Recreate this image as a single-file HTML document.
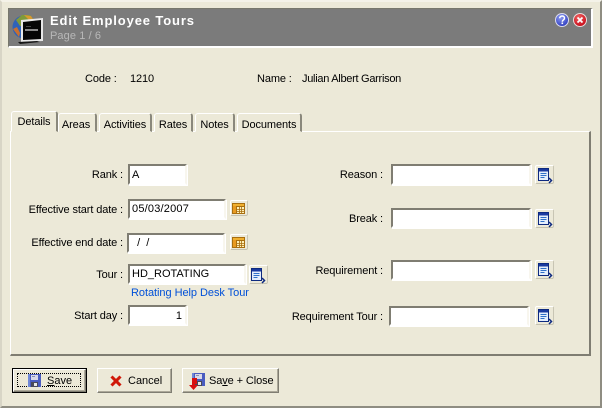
<!DOCTYPE html>
<html><head><meta charset="utf-8"><style>
html,body{margin:0;padding:0}
body{width:602px;height:408px;overflow:hidden;background:#ece9d8;position:relative;font:11px "Liberation Sans",sans-serif;color:#000}
div{position:absolute;box-sizing:border-box}
.t{white-space:nowrap;line-height:14px;height:14px}
.l{letter-spacing:-.12px}
.r{text-align:right}
.i{background:#fff;border:2px solid;border-color:#7f7d72 #f8f6ee #fff #7f7d72;box-shadow:1px 1px 0 #fff;font-size:11px;line-height:17px;padding-left:2px;white-space:nowrap}
.tab{height:19px;border:1px solid;border-color:#fff #8a887c #ece9d8 #fff;border-right-width:2px;border-radius:3px 3px 0 0;text-align:center;line-height:20px;padding-top:1px;background:#ece9d8;white-space:nowrap;letter-spacing:-.1px}
.b{border:1px solid;border-color:#fff #c8c5b4 #c4c1b0 #fff;border-radius:2px;background:#ece9d8}
.b svg,.btn svg{position:absolute}
.btn{height:25px;border:1px solid;border-color:#fff #7f7d72 #7f7d72 #fff;box-shadow:inset -1px -1px 0 #aca899;background:#ece9d8;font-size:11px;line-height:25px;white-space:nowrap}
u{text-decoration:underline}
</style></head><body>
<div style="left:0;top:0;width:602px;height:408px;border:2px solid;border-color:#f4f2e8 #8f8d82 #8f8d82 #d8d5c6"></div>
<div style="left:8px;top:8px;width:585px;height:40px;background:#7b7b7b;border:1px solid;border-color:#77776c #fff #fff #77776c;border-width:1px 2px 2px 1px"></div>
<svg style="position:absolute;left:12px;top:12px" width="34" height="34" viewBox="0 0 34 34">
<circle cx="12" cy="15" r="11.500" fill="#2f62b8"/><path d="M4 8l6-5 8 0 4 5-5 1-3 5-6 0z" fill="#7f9a3a"/><path d="M12 3l7 1 3 5-5-1z" fill="#d89a30"/><path d="M1 17l4-2 3 6-1 4z" fill="#c87030"/>
<path d="M9 8l22-2v23l-22 1z" fill="#e8e8e8"/><path d="M11 10l18-2v19l-18 1z" fill="#060606"/><rect x="13" y="17" width="13" height="2" fill="#888"/><rect x="14" y="14" width="5" height="1" fill="#444"/>
<path d="M6 30l19-1 3 1-20 2z" fill="#151515"/></svg>
<div class="t" style="left:50px;top:13px;color:#fff;font-weight:bold;font-size:13px;height:16px;line-height:16px;letter-spacing:.87px">Edit Employee Tours</div>
<div class="t" style="left:50px;top:29px;color:#b8b8b8;font-size:11px;letter-spacing:.1px">Page 1 / 6</div>
<svg style="position:absolute;left:554px;top:11px" width="36" height="17" viewBox="0 0 36 17">
<defs><radialGradient id="bl" cx=".4" cy=".3" r=".8"><stop offset="0" stop-color="#8d9cf2"/><stop offset="1" stop-color="#2230b8"/></radialGradient>
<radialGradient id="rd" cx=".4" cy=".3" r=".8"><stop offset="0" stop-color="#f06060"/><stop offset="1" stop-color="#c00010"/></radialGradient></defs>
<circle cx="8" cy="9" r="6.500" fill="url(#bl)" stroke="#dcdcec"/>
<path d="M5.700 7.300c0-3 4.800-3 4.800-.2 0 1.800-2.200 1.800-2.200 3.600" fill="none" stroke="#fff" stroke-width="1.500"/><rect x="7.500" y="11.500" width="1.600" height="1.600" fill="#fff"/>
<circle cx="26" cy="9" r="6.500" fill="url(#rd)" stroke="#e8dcdc"/>
<path d="M23.500 6.500l5 5m0-5l-5 5" stroke="#fff" stroke-width="1.800"/></svg>

<div class="t l" style="left:85px;top:72px">Code :</div><div class="t l" style="left:130px;top:72px">1210</div>
<div class="t l" style="left:257px;top:72px">Name :</div><div class="t" style="left:302px;top:72px;letter-spacing:-.28px">Julian Albert Garrison</div>

<div style="left:10px;top:131px;width:581px;height:225px;border:1px solid;border-color:#fff #7f7d72 #7f7d72 #fff;border-right-width:2px;border-bottom-width:2px"></div>
<div class="tab" style="left:58px;top:113px;width:39px;padding-right:2px">Areas</div>
<div class="tab" style="left:99px;top:113px;width:53px">Activities</div>
<div class="tab" style="left:154px;top:113px;width:39px">Rates</div>
<div class="tab" style="left:195px;top:113px;width:40px">Notes</div>
<div class="tab" style="left:237px;top:113px;width:65px">Documents</div>
<div class="tab" style="left:11px;top:111px;width:47px;height:21px;line-height:19px;z-index:2">Details</div>

<div class="t r l" style="left:20px;width:103px;top:168px">Rank :</div>
<div class="t r l" style="left:20px;width:103px;top:203px">Effective start date :</div>
<div class="t r l" style="left:20px;width:103px;top:236px">Effective end date :</div>
<div class="t r l" style="left:20px;width:103px;top:268px">Tour :</div>
<div class="t r l" style="left:20px;width:103px;top:309px">Start day :</div>
<div class="t r l" style="left:280px;width:103px;top:168px">Reason :</div>
<div class="t r l" style="left:280px;width:103px;top:212px">Break :</div>
<div class="t r l" style="left:280px;width:103px;top:264px">Requirement :</div>
<div class="t r l" style="left:280px;width:103px;top:310px">Requirement Tour :</div>

<div class="i" style="left:128px;top:164px;width:59px;height:21px;line-height:18px">A</div>
<div class="i" style="left:128px;top:199px;width:98px;height:20px;letter-spacing:.2px">05/03/2007</div>
<div class="i" style="left:127px;top:233px;width:98px;height:20px">&nbsp;&nbsp;/&nbsp;&nbsp;/</div>
<div class="i" style="left:128px;top:264px;width:118px;height:20px">HD_ROTATING</div>
<div class="i" style="left:128px;top:305px;width:59px;height:20px;text-align:right;padding-right:3px;line-height:18px">1</div>
<div class="i" style="left:391px;top:164px;width:140px;height:21px"></div>
<div class="i" style="left:391px;top:208px;width:140px;height:20px"></div>
<div class="i" style="left:391px;top:260px;width:140px;height:20px"></div>
<div class="i" style="left:389px;top:306px;width:140px;height:20px"></div>
<div class="t" style="left:131px;top:286px;color:#0050d8;font-size:11px;letter-spacing:-.05px">Rotating Help Desk Tour</div>

<svg width="0" height="0" style="position:absolute"><defs>
<g id="cal"><rect width="13" height="11" fill="#a86e10"/><rect x="1" y="1" width="11" height="2" fill="#f0b030"/><rect x="1" y="3" width="3" height="7" fill="#e89a20"/><rect x="5" y="4" width="7" height="6" fill="#fff0b8"/><path d="M5 6.500h7M5 8.500h7M7.500 4v6M9.500 4v6" stroke="#a86e10" stroke-width=".8"/></g>
<g id="lk"><rect x=".5" y=".5" width="10" height="12" fill="#e4eefc" stroke="#0e2a80"/><rect x="1" y="1" width="9" height="2.500" fill="#1a3aa0"/><path d="M2.500 5.500h6M2.500 7.500h6M2.500 9.500h4" stroke="#3070c8"/><path d="M11 10l2.500 2.500-2.500 2.500" fill="none" stroke="#0e2a80" stroke-width="1.500"/></g>
<g id="fd"><rect x="0" y="0" width="13" height="13" fill="#4a5cc0"/><rect x="0" y="0" width="2" height="13" fill="#7088d8"/><rect x="3" y="1" width="7" height="5" fill="#d8d8e8"/><rect x="4" y="2" width="3" height="1" fill="#8890b8"/><rect x="3" y="8" width="7" height="5" fill="#4a4a58"/><rect x="6" y="9" width="3" height="3" fill="#e8e8e8"/></g>
</defs></svg>
<div class="b" style="left:230px;top:200px;width:18px;height:16px"><svg style="left:1px;top:2px" width="14" height="12"><use href="#cal"/></svg></div>
<div class="b" style="left:230px;top:234px;width:18px;height:16px"><svg style="left:1px;top:2px" width="14" height="12"><use href="#cal"/></svg></div>

<div class="b" style="left:249px;top:265px;width:19px;height:19px"><svg style="left:1px;top:2px" width="15" height="16"><use href="#lk"/></svg></div>
<div class="b" style="left:535px;top:165px;width:19px;height:19px"><svg style="left:2px;top:2px" width="15" height="16"><use href="#lk"/></svg></div>
<div class="b" style="left:535px;top:209px;width:19px;height:19px"><svg style="left:2px;top:2px" width="15" height="16"><use href="#lk"/></svg></div>
<div class="b" style="left:535px;top:260px;width:19px;height:19px"><svg style="left:2px;top:2px" width="15" height="16"><use href="#lk"/></svg></div>
<div class="b" style="left:535px;top:306px;width:19px;height:19px"><svg style="left:2px;top:2px" width="15" height="16"><use href="#lk"/></svg></div>

<div style="left:12px;top:368px;width:75px;height:25px;border:1px solid #000"></div>
<div class="btn" style="left:13px;top:369px;width:73px;height:23px;line-height:23px"><div style="left:3px;top:3px;right:4px;bottom:4px;border:1px dotted #000"></div><svg style="left:14px;top:4px" width="13" height="13"><use href="#fd"/></svg><span style="position:absolute;left:33px;top:0"><u>S</u>ave</span></div>
<div class="btn" style="left:97px;top:368px;width:75px"><svg style="left:12px;top:6px" width="13" height="13" viewBox="0 0 13 13"><path d="M1.500 1.500l9 9m0-9l-9 9" stroke="#d01808" stroke-width="3"/></svg><span style="position:absolute;left:30px;top:0">Cancel</span></div>
<div class="btn" style="left:182px;top:368px;width:97px"><svg style="left:9px;top:4px" width="13" height="13"><use href="#fd"/></svg><svg style="left:6px;top:9px" width="9" height="12" viewBox="0 0 9 12"><path d="M3 0h5v6H6v1h3l-4.500 5L0 7h3z" fill="#d81010"/></svg><span style="position:absolute;left:26px;top:0;letter-spacing:-.1px">Sa<u>v</u>e + Close</span></div>
</body></html>
